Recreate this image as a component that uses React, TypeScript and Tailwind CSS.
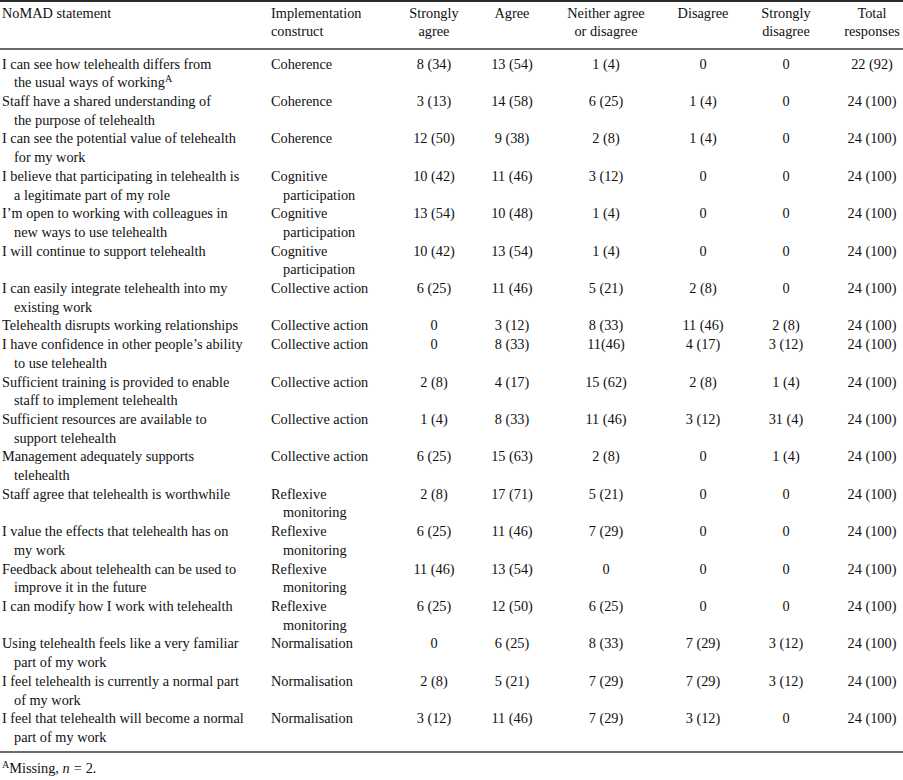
import React from "react";

type Row = {
  s: string[];
  sup?: boolean;
  c: string[];
  v: string[];
};

const rows: Row[] = [
  { s: ["I can see how telehealth differs from", "the usual ways of working"], sup: true, c: ["Coherence"], v: ["8 (34)", "13 (54)", "1 (4)", "0", "0", "22 (92)"] },
  { s: ["Staff have a shared understanding of", "the purpose of telehealth"], c: ["Coherence"], v: ["3 (13)", "14 (58)", "6 (25)", "1 (4)", "0", "24 (100)"] },
  { s: ["I can see the potential value of telehealth", "for my work"], c: ["Coherence"], v: ["12 (50)", "9 (38)", "2 (8)", "1 (4)", "0", "24 (100)"] },
  { s: ["I believe that participating in telehealth is", "a legitimate part of my role"], c: ["Cognitive", "participation"], v: ["10 (42)", "11 (46)", "3 (12)", "0", "0", "24 (100)"] },
  { s: ["I\u2019m open to working with colleagues in", "new ways to use telehealth"], c: ["Cognitive", "participation"], v: ["13 (54)", "10 (48)", "1 (4)", "0", "0", "24 (100)"] },
  { s: ["I will continue to support telehealth"], c: ["Cognitive", "participation"], v: ["10 (42)", "13 (54)", "1 (4)", "0", "0", "24 (100)"] },
  { s: ["I can easily integrate telehealth into my", "existing work"], c: ["Collective action"], v: ["6 (25)", "11 (46)", "5 (21)", "2 (8)", "0", "24 (100)"] },
  { s: ["Telehealth disrupts working relationships"], c: ["Collective action"], v: ["0", "3 (12)", "8 (33)", "11 (46)", "2 (8)", "24 (100)"] },
  { s: ["I have confidence in other people\u2019s ability", "to use telehealth"], c: ["Collective action"], v: ["0", "8 (33)", "11(46)", "4 (17)", "3 (12)", "24 (100)"] },
  { s: ["Sufficient training is provided to enable", "staff to implement telehealth"], c: ["Collective action"], v: ["2 (8)", "4 (17)", "15 (62)", "2 (8)", "1 (4)", "24 (100)"] },
  { s: ["Sufficient resources are available to", "support telehealth"], c: ["Collective action"], v: ["1 (4)", "8 (33)", "11 (46)", "3 (12)", "31 (4)", "24 (100)"] },
  { s: ["Management adequately supports", "telehealth"], c: ["Collective action"], v: ["6 (25)", "15 (63)", "2 (8)", "0", "1 (4)", "24 (100)"] },
  { s: ["Staff agree that telehealth is worthwhile"], c: ["Reflexive", "monitoring"], v: ["2 (8)", "17 (71)", "5 (21)", "0", "0", "24 (100)"] },
  { s: ["I value the effects that telehealth has on", "my work"], c: ["Reflexive", "monitoring"], v: ["6 (25)", "11 (46)", "7 (29)", "0", "0", "24 (100)"] },
  { s: ["Feedback about telehealth can be used to", "improve it in the future"], c: ["Reflexive", "monitoring"], v: ["11 (46)", "13 (54)", "0", "0", "0", "24 (100)"] },
  { s: ["I can modify how I work with telehealth"], c: ["Reflexive", "monitoring"], v: ["6 (25)", "12 (50)", "6 (25)", "0", "0", "24 (100)"] },
  { s: ["Using telehealth feels like a very familiar", "part of my work"], c: ["Normalisation"], v: ["0", "6 (25)", "8 (33)", "7 (29)", "3 (12)", "24 (100)"] },
  { s: ["I feel telehealth is currently a normal part", "of my work"], c: ["Normalisation"], v: ["2 (8)", "5 (21)", "7 (29)", "7 (29)", "3 (12)", "24 (100)"] },
  { s: ["I feel that telehealth will become a normal", "part of my work"], c: ["Normalisation"], v: ["3 (12)", "11 (46)", "7 (29)", "3 (12)", "0", "24 (100)"] },
];

const grid = "grid grid-cols-[269px_126px_78px_78px_110px_84px_96px_62px]";

function Sup() {
  return <span className="relative top-[-5px] text-[10px] leading-none">A</span>;
}

export default function App() {
  return (
    <div className="w-[903px] bg-white font-['Liberation_Serif',serif] text-[14.3px] leading-[18.7px] text-[#111]">
      <div className="h-[2px] bg-[#2a2a2a]" />
      <div className={`${grid} pt-[1.6px] pb-[7px]`}>
        <div className="pl-[2px]">NoMAD statement</div>
        <div className="pl-[2px]">
          <div>Implementation</div>
          <div>construct</div>
        </div>
        <div className="text-center">
          <div>Strongly</div>
          <div>agree</div>
        </div>
        <div className="text-center">Agree</div>
        <div className="text-center">
          <div>Neither agree</div>
          <div>or disagree</div>
        </div>
        <div className="text-center">Disagree</div>
        <div className="pr-[14px] text-center">
          <div>Strongly</div>
          <div>disagree</div>
        </div>
        <div className="text-center">
          <div>Total</div>
          <div>responses</div>
        </div>
      </div>
      <div className="h-[2px] bg-[#6b6b6b]" />
      <div className="pt-[4.6px] pb-[4.5px]">
        {rows.map((r, i) => (
          <div key={i} className={grid}>
            <div className="pl-[2px] whitespace-nowrap">
              <div>{r.s[0]}</div>
              {r.s[1] && (
                <div className="pl-[12px]">
                  {r.s[1]}
                  {r.sup && <Sup />}
                </div>
              )}
            </div>
            <div className="pl-[2px] whitespace-nowrap">
              <div>{r.c[0]}</div>
              {r.c[1] && <div className="pl-[12px]">{r.c[1]}</div>}
            </div>
            {r.v.map((v, j) => (
              <div key={j} className={`text-center whitespace-nowrap ${j === 4 ? "pr-[14px]" : ""}`}>
                {v}
              </div>
            ))}
          </div>
        ))}
      </div>
      <div className="h-[2px] bg-[#6b6b6b]" />
      <div className="pl-[2px] pt-[5.6px] pb-[4px]">
        <Sup />
        Missing, <span className="italic">n</span>
        <span className="px-[4px]">=</span>2.
      </div>
    </div>
  );
}
